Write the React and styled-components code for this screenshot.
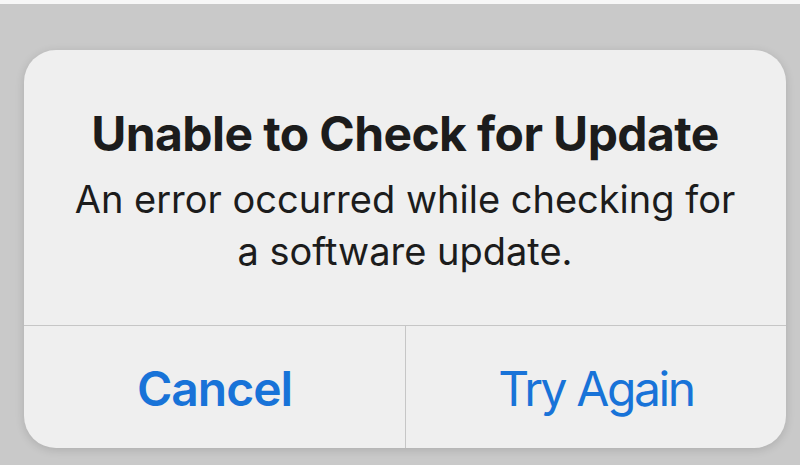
import React from 'react';
import styled, { createGlobalStyle } from 'styled-components';

const GlobalStyle = createGlobalStyle`
  html, body {
    margin: 0;
    padding: 0;
    background: #c9c9c9;
  }
  body {
    font-family: Inter, "Noto Sans", sans-serif;
    -webkit-font-smoothing: antialiased;
  }
`;

const Page = styled.div`
  height: 465px;
  box-sizing: border-box;
  border-top: 4px solid #f7f7f7;
  padding: 46px 14px 0 24px;
  background: #c9c9c9;
  overflow: hidden;
`;

const Alert = styled.div`
  width: 762px;
  height: 398px;
  border-radius: 32px;
  background: #efefef;
  box-shadow: 0 2px 10px rgba(0, 0, 0, 0.14);
  display: flex;
  flex-direction: column;
  overflow: hidden;
`;

const Body = styled.div`
  height: 276px;
  box-sizing: border-box;
  padding-top: 56px;
  text-align: center;
  color: #1c1c1c;
  border-bottom: 1px solid #c6c6c6;
`;

const Title = styled.h1`
  margin: 0;
  font-size: 48px;
  line-height: 56px;
  font-weight: 700;
  letter-spacing: -0.6px;
`;

const Message = styled.p`
  margin: 11px 0 0;
  font-size: 38px;
  line-height: 52px;
  font-weight: 400;
  letter-spacing: 0;
`;

const Actions = styled.div`
  flex: 1;
  display: grid;
  grid-template-columns: 1fr 1fr;
`;

const Action = styled.button`
  border: none;
  background: transparent;
  padding: 4px 0 0;
  margin: 0;
  font-family: Inter, "Noto Sans", sans-serif;
  font-size: 48px;
  line-height: 56px;
  color: #1873d8;
  font-weight: ${(p) => (p.$primary ? 600 : 400)};
  letter-spacing: ${(p) => (p.$primary ? '-1px' : '-2.4px')};
  cursor: pointer;
  & + & {
    border-left: 1px solid #c6c6c6;
  }
`;

export default function App() {
  return (
    <>
      <GlobalStyle />
      <Page>
        <Alert>
          <Body>
            <Title>Unable to Check for Update</Title>
            <Message>
              An error occurred while checking for
              <br />
              a software update.
            </Message>
          </Body>
          <Actions>
            <Action $primary>Cancel</Action>
            <Action>Try Again</Action>
          </Actions>
        </Alert>
      </Page>
    </>
  );
}
